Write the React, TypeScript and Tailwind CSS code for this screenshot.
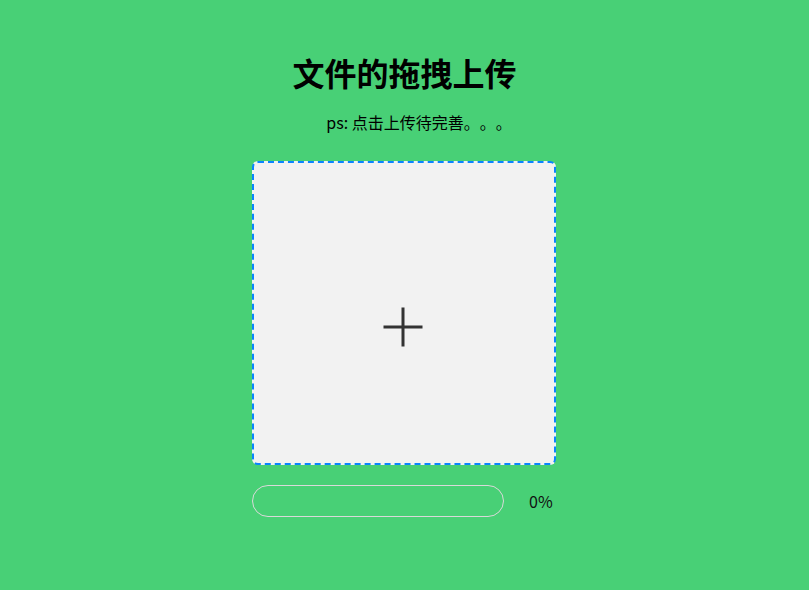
export default function App() {
  return (
    <div
      className="min-h-[590px] w-full bg-[#48d076] flex flex-col items-center pt-[48px] [text-spacing-trim:space-all]"
      style={{ fontFamily: '"Noto Sans CJK SC", "Noto Sans", sans-serif' }}
    >
      <h1 className="text-[32px] leading-[48px] font-bold text-black">文件的拖拽上传</h1>
      <p className="mt-[14px] text-[16px] leading-[24px] text-black pl-[29px]">ps: 点击上传待完善。。。</p>
      <div className="mt-[27px] mr-[1px] w-[304px] h-[304px] rounded-[6px] border-2 border-dashed border-[#0a84ff] bg-[#f2f2f2] flex items-center justify-center">
        <svg width="42" height="42" viewBox="0 0 42 42" className="mt-[28px] mr-[2px]">
          <path d="M21 1.5v39M1.5 21h39" stroke="#333" strokeWidth="3" />
        </svg>
      </div>
      <div className="mt-[20px] mr-[1px] flex items-center w-[304px]">
        <div className="w-[252px] h-[32px] rounded-full border border-[#d9d9d9]" />
        <span className="ml-[25px] text-[16px] text-[#111]">0%</span>
      </div>
    </div>
  );
}
